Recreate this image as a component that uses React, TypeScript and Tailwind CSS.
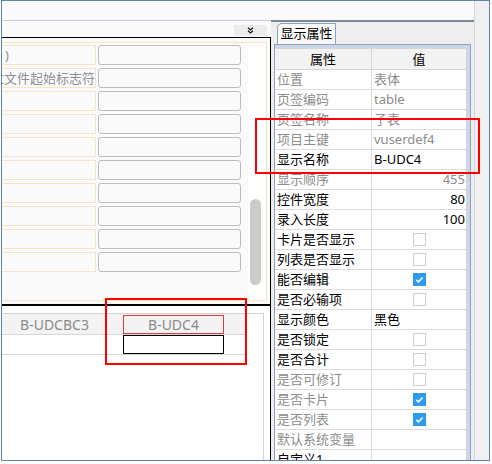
import React from 'react';

const FONT = "font-['Noto_Sans','Noto_Sans_CJK_SC',sans-serif]";

type Row = {
  label: string;
  value?: string;
  kind?: 'text' | 'num' | 'check';
  checked?: boolean;
  gray?: boolean;
};

const rows: Row[] = [
  { label: '位置', value: '表体', gray: true },
  { label: '页签编码', value: 'table', gray: true },
  { label: '页签名称', value: '子表', gray: true },
  { label: '项目主键', value: 'vuserdef4', gray: true },
  { label: '显示名称', value: 'B-UDC4' },
  { label: '显示顺序', value: '455', kind: 'num', gray: true },
  { label: '控件宽度', value: '80', kind: 'num' },
  { label: '录入长度', value: '100', kind: 'num' },
  { label: '卡片是否显示', kind: 'check' },
  { label: '列表是否显示', kind: 'check' },
  { label: '能否编辑', kind: 'check', checked: true },
  { label: '是否必输项', kind: 'check' },
  { label: '显示颜色', value: '黑色' },
  { label: '是否锁定', kind: 'check' },
  { label: '是否合计', kind: 'check' },
  { label: '是否可修订', kind: 'check', gray: true },
  { label: '是否卡片', kind: 'check', checked: true, gray: true },
  { label: '是否列表', kind: 'check', checked: true, gray: true },
  { label: '默认系统变量', gray: true },
  { label: '自定义1' },
];

const formLabels = [')', '是否跳过文件起始标志符', '', '', '', '', '', '', '', ''];

function Check({ checked }: { checked?: boolean }) {
  return checked ? (
    <span className="flex h-[13px] w-[13px] items-center justify-center bg-[#2f9bf0]">
      <svg width="13" height="13" viewBox="0 0 13 13">
        <path d="M3.4 6.9 L5.4 8.9 L9.6 4.4" fill="none" stroke="#ffffff" strokeWidth="1.5" />
      </svg>
    </span>
  ) : (
    <span className="block h-[13px] w-[13px] border border-[#cdcdcd] bg-white" />
  );
}

export default function App() {
  return (
    <div className={`relative w-[492px] h-[464px] bg-white overflow-hidden ${FONT}`}>
      <div className="ml-[1px] w-[489px] h-[461px] border border-[#5f82b0] flex overflow-hidden">
        <div className="w-[472px] flex flex-col">
          <div className="h-[19px] shrink-0 bg-[#fafafa]" />
          <div className="flex flex-1 min-h-0">
            {/* left pane */}
            <div className="w-[269px] flex flex-col">
              <div className="h-[18px] shrink-0 border-t border-b border-t-[#c5cfdc] border-b-black bg-[#fafafa] flex justify-end pt-[4px] pr-[4px]">
                <div className="w-[33px] h-[11px] bg-[#ececec] flex items-center justify-center">
                  <svg width="7" height="7" viewBox="0 0 7 7">
                    <path d="M1 0.8 L3.5 3 L6 0.8 M1 3.8 L3.5 6 L6 3.8" fill="none" stroke="#111111" strokeWidth="1.2" />
                  </svg>
                </div>
              </div>
              <div className="flex-1 min-h-0 flex flex-col border-r border-black">
                <div className="shrink-0 bg-[#fafafa] pt-[4px] pb-[3px] border-b-2 border-black">
                  <div className="w-[265px] h-[259px] border-t border-r border-b border-[#f3e4c6] flex">
                    <div className="flex-1 bg-[#fafafa] pt-[2px] flex flex-col gap-[3px]">
                      {formLabels.map((t, i) => (
                        <div key={i} className="flex gap-[2px]">
                          <div
                            className={`w-[94px] h-[20px] border-t border-b border-r border-[#f5e5c6] flex justify-end overflow-hidden whitespace-nowrap text-[13px] leading-[18px] text-[#8f8f8f] ${
                              i === 0 ? 'pr-[86px]' : 'pr-0'
                            }`}
                          >
                            {t}
                          </div>
                          <div className="w-[143px] h-[20px] rounded-[3px] border border-[#bcbcbc] bg-[#fafafa]" />
                        </div>
                      ))}
                    </div>
                    <div className="w-[18px] bg-white pl-[2px] pt-[156px]">
                      <div className="w-[11px] h-[86px] rounded-full bg-[#cbcbcb]" />
                    </div>
                  </div>
                </div>
                <div className="flex-1 min-h-0 bg-white pt-[7px]">
                  <div className="w-[262px] h-full border-t border-r border-[#d3d3d3]">
                    <div className="flex w-[244px] h-[21px] bg-[#f3f3f3] border-b border-[#d8d8d8] text-[14px] leading-[19px] text-[#8a8a8a]">
                      <div className="w-[121px] flex justify-center pr-[16px] pt-[1px]">B-UDCBC3</div>
                      <div className="w-[101px] mt-[1px] h-[19px] border border-[#e23a3a] flex items-center justify-center">B-UDC4</div>
                      <div className="flex-1" />
                    </div>
                    <div className="flex w-[244px] h-[20px] border-b border-[#d8d8d8]">
                      <div className="ml-[121px] w-[101px] h-[19px] border border-black bg-white" />
                    </div>
                  </div>
                </div>
              </div>
            </div>
            {/* right properties panel */}
            <div className="w-[203px] flex flex-col bg-[#eeeeee] border-t-2 border-[#7d8895]">
              <div className="h-[22px] shrink-0 pl-[6px] pt-[1px] flex">
                <div className="w-[59px] h-[21px] rounded-tl-[5px] border-t border-l border-r border-[#8aa3c4] bg-[#f8f8f8] text-[13px] leading-[19px] text-black text-center">
                  显示属性
                </div>
              </div>
              <div className="flex-1 min-h-0 mx-[3px] border-t border-l border-r border-[#8aa3c4] bg-[#cbd7e6] pt-[3px] pr-[3px] overflow-hidden">
                <div className="bg-white border-r border-[#d4d4d4]">
                  <div className="flex h-[22px] border-t border-b border-[#d6d6d6] bg-[#f2f2f2] text-[13px] leading-[20px] text-black">
                    <div className="w-[97px] border-r border-[#d6d6d6] text-center">属性</div>
                    <div className="flex-1 text-center">值</div>
                  </div>
                  {rows.map((r) => (
                    <div key={r.label} className="flex h-[20px] border-b border-[#dcdcdc] text-[13px] leading-[19px]">
                      <div
                        className={`w-[97px] border-r border-[#dcdcdc] pl-[2px] whitespace-nowrap ${
                          r.gray ? 'text-[#8c8c8c]' : 'text-black'
                        }`}
                      >
                        {r.label}
                      </div>
                      {r.kind === 'check' ? (
                        <div className="flex-1 flex items-center justify-center">
                          <Check checked={r.checked} />
                        </div>
                      ) : r.kind === 'num' ? (
                        <div className={`flex-1 text-right pr-[1px] ${r.gray ? 'text-[#8c8c8c]' : 'text-black'}`}>{r.value}</div>
                      ) : (
                        <div className={`flex-1 pl-[2px] whitespace-nowrap ${r.gray ? 'text-[#8c8c8c]' : 'text-black'}`}>{r.value}</div>
                      )}
                    </div>
                  ))}
                </div>
              </div>
            </div>
          </div>
        </div>
        <div className="flex-1 border-l border-[#d6d6d6] bg-[#f0f0f0]" />
      </div>
      {/* red annotation boxes */}
      <div className="absolute left-[255px] top-[118px] w-[225px] h-[56px] border-2 border-[#ff0000]" />
      <div className="absolute left-[105px] top-[298px] w-[142px] h-[67px] border-2 border-[#ff0000]" />
    </div>
  );
}
